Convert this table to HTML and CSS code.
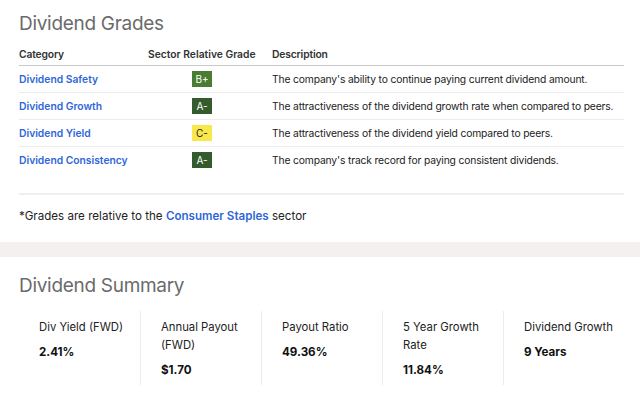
FILE: index.html
```html
<!DOCTYPE html>
<html>
<head>
<meta charset="utf-8">
<link rel="stylesheet" href="styles.css">
</head>
<body>
<section class="grades">
  <h2 class="title">Dividend Grades</h2>
  <table class="grade-table">
    <thead>
      <tr>
        <th class="col-cat">Category</th>
        <th class="col-grade">Sector Relative Grade</th>
        <th class="col-desc">Description</th>
      </tr>
    </thead>
    <tbody>
      <tr>
        <td class="col-cat"><a class="cat-link">Dividend Safety</a></td>
        <td class="col-grade"><span class="badge badge-bplus">B+</span></td>
        <td class="col-desc">The company's ability to continue paying current dividend amount.</td>
      </tr>
      <tr>
        <td class="col-cat"><a class="cat-link">Dividend Growth</a></td>
        <td class="col-grade"><span class="badge badge-a">A-</span></td>
        <td class="col-desc">The attractiveness of the dividend growth rate when compared to peers.</td>
      </tr>
      <tr>
        <td class="col-cat"><a class="cat-link">Dividend Yield</a></td>
        <td class="col-grade"><span class="badge badge-c">C-</span></td>
        <td class="col-desc">The attractiveness of the dividend yield compared to peers.</td>
      </tr>
      <tr class="last">
        <td class="col-cat"><a class="cat-link">Dividend Consistency</a></td>
        <td class="col-grade"><span class="badge badge-a">A-</span></td>
        <td class="col-desc">The company's track record for paying consistent dividends.</td>
      </tr>
    </tbody>
  </table>
  <div class="divider"></div>
  <p class="note">*Grades are relative to the <a class="sector-link">Consumer Staples</a> sector</p>
</section>
<div class="band"></div>
<section class="summary">
  <h2 class="title">Dividend Summary</h2>
  <div class="stats">
    <div class="stat">
      <div class="stat-label">Div Yield (FWD)</div>
      <div class="stat-value">2.41%</div>
    </div>
    <div class="stat">
      <div class="stat-label">Annual Payout<br>(FWD)</div>
      <div class="stat-value">$1.70</div>
    </div>
    <div class="stat">
      <div class="stat-label">Payout Ratio</div>
      <div class="stat-value">49.36%</div>
    </div>
    <div class="stat">
      <div class="stat-label">5 Year Growth<br>Rate</div>
      <div class="stat-value">11.84%</div>
    </div>
    <div class="stat">
      <div class="stat-label">Dividend Growth</div>
      <div class="stat-value">9 Years</div>
    </div>
  </div>
</section>
</body>
</html>
```
FILE: styles.css
```css
* { box-sizing: border-box; }
html, body {
  margin: 0;
  padding: 0;
  background: #fff;
  font-family: Inter, "Liberation Sans", Arial, sans-serif;
  color: #222;
}
.grades {
  padding: 10px 16px 0 19px;
}
.title {
  margin: 0;
  font-size: 19px;
  line-height: 28px;
  font-weight: 400;
  color: #6b6b6b;
  letter-spacing: -0.3px;
}
.grade-table {
  width: 100%;
  table-layout: fixed;
  border-collapse: collapse;
  margin-top: 5px;
  font-size: 10.3px;
  letter-spacing: -0.15px;
}
.grade-table th {
  text-align: left;
  font-weight: 600;
  color: #333;
  height: 22px;
  padding: 0;
  border-bottom: 1px solid #c9c9c9;
  vertical-align: middle;
  white-space: nowrap;
}
.grade-table th.col-grade { letter-spacing: 0; }
.grade-table td {
  height: 27px;
  padding: 0;
  border-bottom: 1px solid #ececec;
  vertical-align: middle;
  color: #222;
  white-space: nowrap;
}
.grade-table tr.last td { border-bottom: none; }
.grade-table .col-cat { width: 129px; }
.grade-table .col-grade { width: 124px; padding-right: 16px; }
.grade-table td.col-grade { text-align: center; }
.cat-link {
  color: #2f67d8;
  font-weight: 600;
  letter-spacing: 0;
  text-decoration: none;
}
.badge {
  display: inline-block;
  width: 20px;
  height: 16px;
  line-height: 16px;
  font-size: 10px;
  letter-spacing: 0;
  text-align: center;
  color: #fff;
  vertical-align: middle;
}
.badge-bplus { background: #4a7d31; }
.badge-a { background: #345b2c; }
.badge-c { background: #f8e84c; color: #222; }
.divider {
  height: 2px;
  background: #efefef;
  margin-top: 20px;
}
.note {
  margin: 13px 0 0;
  font-size: 11.6px;
  line-height: 16px;
  color: #222;
}
.sector-link {
  color: #2f67d8;
  font-weight: 600;
  text-decoration: none;
}
.band {
  height: 15px;
  background: #f4f0ef;
  margin-top: 18px;
}
.summary {
  padding: 15px 16px 0 19px;
}
.stats {
  display: flex;
  margin-top: 11px;
}
.stat {
  width: 121px;
  height: 74px;
  padding: 7px 0 0 20px;
  border-left: 1px solid #ececec;
  font-size: 11.3px;
  line-height: 18px;
}
.stat:first-child { border-left: none; }
.stat-label { color: #222; }
.stat-value {
  margin-top: 7px;
  font-weight: 700;
  font-size: 11.6px;
  color: #111;
}
```
